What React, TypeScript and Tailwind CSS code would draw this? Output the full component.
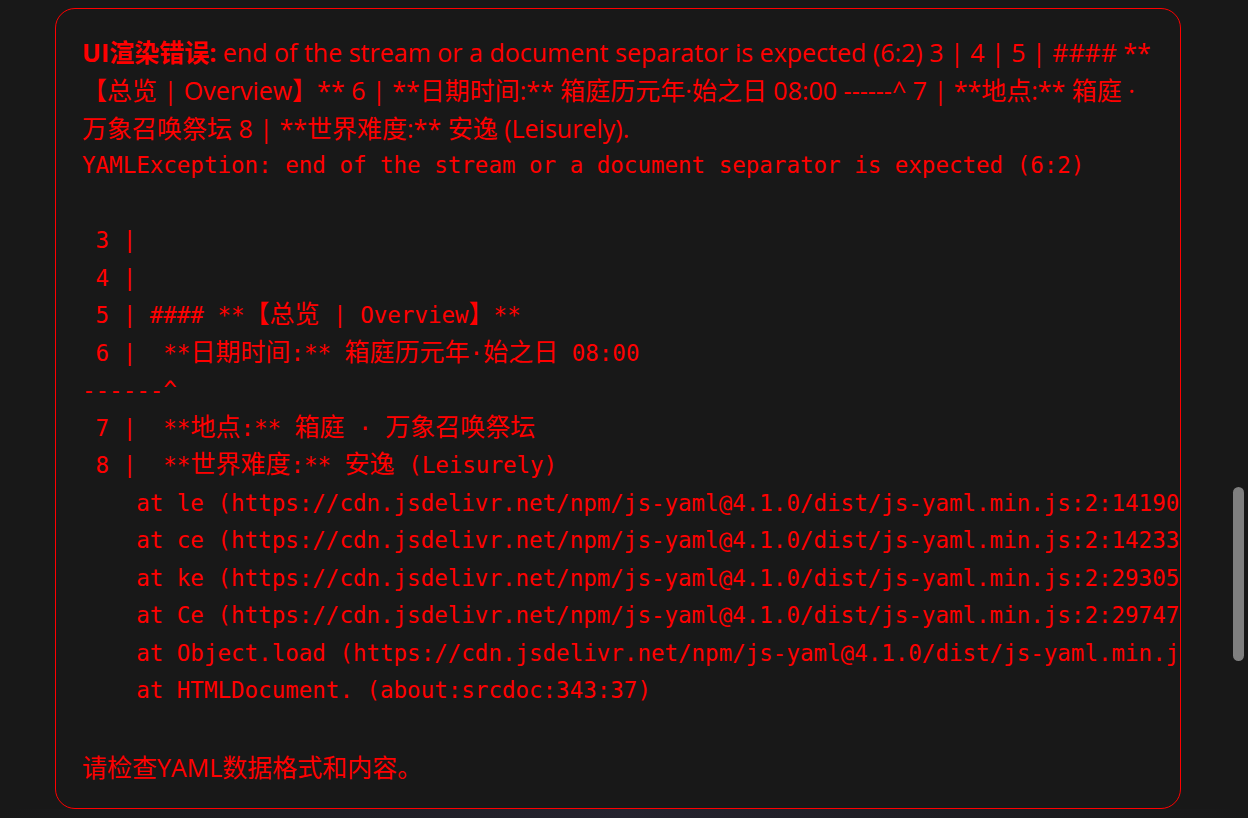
import React from 'react';

const stackLines = [
  'YAMLException: end of the stream or a document separator is expected (6:2)',
  '',
  ' 3 | ',
  ' 4 | ',
  ' 5 | #### **【总览 | Overview】**',
  ' 6 |  **日期时间:** 箱庭历元年·始之日 08:00',
  '------^',
  ' 7 |  **地点:** 箱庭 · 万象召唤祭坛',
  ' 8 |  **世界难度:** 安逸 (Leisurely)',
  '    at le (https://cdn.jsdelivr.net/npm/js-yaml@4.1.0/dist/js-yaml.min.js:2:14190)',
  '    at ce (https://cdn.jsdelivr.net/npm/js-yaml@4.1.0/dist/js-yaml.min.js:2:14233)',
  '    at ke (https://cdn.jsdelivr.net/npm/js-yaml@4.1.0/dist/js-yaml.min.js:2:29305)',
  '    at Ce (https://cdn.jsdelivr.net/npm/js-yaml@4.1.0/dist/js-yaml.min.js:2:29747)',
  '    at Object.load (https://cdn.jsdelivr.net/npm/js-yaml@4.1.0/dist/js-yaml.min.js:2:29841)',
  '    at HTMLDocument. (about:srcdoc:343:37)',
];

// the mono font has no CJK glyphs; the fallback in the original is wider, so give those runs their own size
const cjkRun = /([\u3000-\u303f\u4e00-\u9fff\uff00-\uffef]+)/;

function StackLine({ text }: { text: string }) {
  const parts = text.split(cjkRun);
  return (
    <>
      {parts.map((part, i) =>
        i % 2 === 1 ? (
          <span key={i} className="font-['Noto_Sans_CJK_SC',sans-serif] text-[25px] leading-none">
            {part}
          </span>
        ) : (
          <React.Fragment key={i}>{part}</React.Fragment>
        )
      )}
      {'\n'}
    </>
  );
}

function ErrorPanel() {
  return (
    <div className="ml-[55px] w-[1126px] overflow-hidden rounded-[20px] border border-[#ff0000] pt-6 pb-[22px] pl-[26px] pr-6 text-[#ff0000]">
      <p className="whitespace-nowrap font-['Open_Sans','Noto_Sans_CJK_SC',sans-serif] text-[25px] leading-[38px]">
        <strong className="font-bold">UI渲染错误:</strong> end of the stream or a document separator is expected (6:2) 3 | 4 | 5 | #### **
        <br />
        【总览 | Overview】** 6 | **日期时间:** 箱庭历元年·始之日 08:00 ------^ 7 | **地点:** 箱庭 ·
        <br />
        万象召唤祭坛 8 | **世界难度:** 安逸 (Leisurely).
      </p>
      <pre className="whitespace-pre font-['DejaVu_Sans_Mono',monospace] text-[22.5px] leading-[37.5px]">
        {stackLines.map((line, i) => (
          <StackLine key={i} text={line} />
        ))}
      </pre>
      <p className="mt-[38px] font-['Open_Sans','Noto_Sans_CJK_SC',sans-serif] text-[25px] leading-[38px]">
        请检查YAML数据格式和内容。
      </p>
    </div>
  );
}

export default function App() {
  return (
    <div className="relative h-[818px] overflow-hidden bg-[#181818] pt-2">
      <ErrorPanel />
      <div className="h-[10px] bg-linear-to-r from-[#181818] via-[#25232f] to-[#181818]" />
      {/* overlay scrollbar thumb */}
      <div className="absolute left-[1233px] top-[487px] h-[174px] w-[11px] rounded-full bg-[#7f7f7f]" />
    </div>
  );
}
